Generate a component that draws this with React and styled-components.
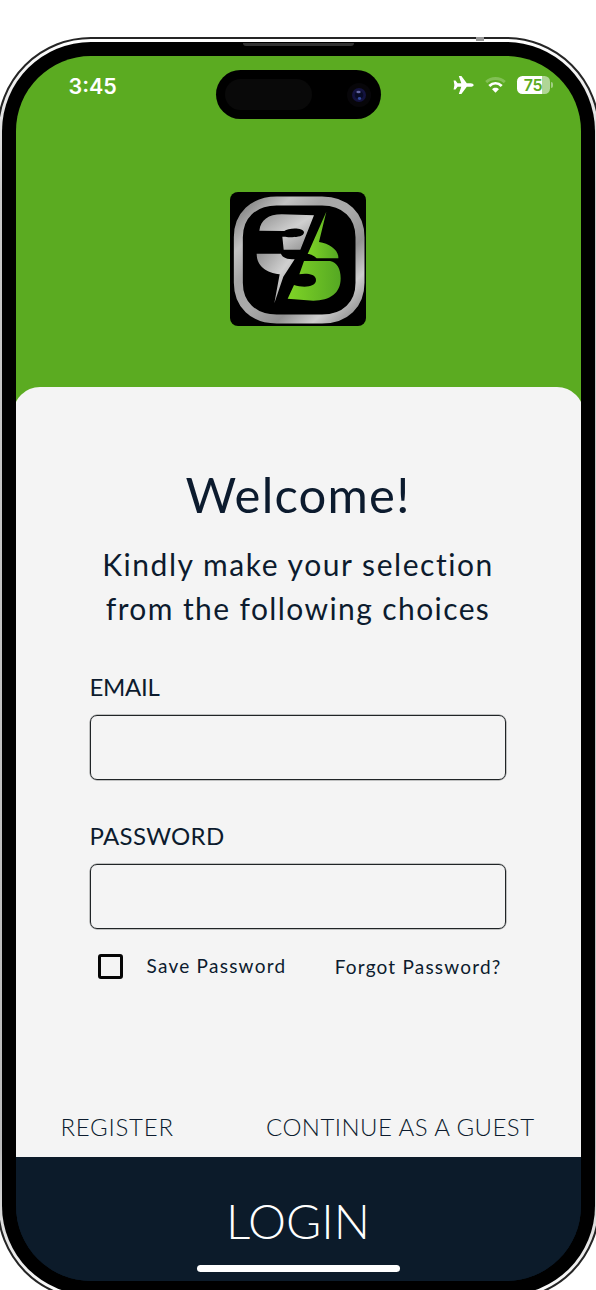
import React, { useState } from 'react';
import styled, { createGlobalStyle } from 'styled-components';

const GlobalStyle = createGlobalStyle`
  * {
    box-sizing: border-box;
  }

  body {
    margin: 0;
    background: #fff;
    color: #0c1b2e;
    font-family: Lato, 'Open Sans', sans-serif;
  }
`;

const Page = styled.main`
  width: 596px;
  height: 1290px;
  padding-top: 37px;
  overflow: hidden;
`;

const Frame = styled.div`
  width: 603px;
  height: 1263px;
  margin-left: -3.5px;
  padding: 3px;
  border: 2px solid #252525;
  border-radius: 94px;
  background: linear-gradient(180deg, #fff, #c9c9c9 12%, #bbb 88%, #fff);
`;

const Bezel = styled.div`
  position: relative;
  height: 100%;
  padding: 14px;
  border-radius: 89px;
  background: #000;
`;

const Speaker = styled.span`
  position: absolute;
  top: 1px;
  left: 241px;
  width: 111px;
  height: 3px;
  border-radius: 0 0 3px 3px;
  background: #333;
`;

const AntennaBand = styled.span`
  position: absolute;
  top: -5px;
  left: 474px;
  width: 8px;
  height: 4px;
  background: #999;
`;

const Screen = styled.div`
  display: flex;
  flex-direction: column;
  height: 1225px;
  border-radius: 75px;
  background: linear-gradient(#5bab21 50%, #0c1b2a 50%);
  overflow: hidden;
`;

const StatusBar = styled.header`
  display: flex;
  justify-content: space-between;
  height: 64px;
  padding: 14px 29px 0 53px;
  color: #fff;
`;

const Clock = styled.time`
  width: 147px;
  padding-top: 2px;
  font: 600 21.5px/28px Inter, sans-serif;
`;

const Island = styled.div`
  display: flex;
  align-items: center;
  justify-content: space-between;
  width: 165px;
  height: 49px;
  padding: 0 10px 0 9px;
  border-radius: 25px;
  background: #000;
`;

const Sensor = styled.span`
  width: 87px;
  height: 31px;
  border-radius: 16px;
  background: #090909;
`;

const StatusIcons = styled.div`
  display: flex;
  align-items: center;
  gap: 11px;
  width: 171px;
  height: 30px;
  padding-left: 72px;
`;

const Battery = styled.div`
  position: relative;
  width: 33px;
  height: 18px;
  border-radius: 5.5px;
  background: linear-gradient(90deg, #fff 75%, #b0d696 75%);
  color: #5bab21;
  font: 600 16px/18px Inter, sans-serif;
  letter-spacing: -0.3px;
  text-align: center;

  &::after {
    content: '';
    position: absolute;
    top: 6px;
    right: -3px;
    width: 2px;
    height: 6px;
    border-radius: 0 3px 3px 0;
    background: #a2cf83;
  }
`;

const Brand = styled.div`
  display: flex;
  justify-content: center;
  height: 267px;
  padding-top: 72px;
`;

const Card = styled.section`
  display: flex;
  flex: 1;
  flex-direction: column;
  margin: 0 -3px;
  padding: 78px 48px 0;
  border-radius: 27px 27px 0 0;
  background: #f4f4f4;
`;

const Title = styled.h1`
  margin: 0;
  font-size: 49px;
  font-weight: 400;
  line-height: 58px;
  letter-spacing: 1.2px;
  text-align: center;
`;

const Lead = styled.p`
  margin: 19px 0 0;
  font-size: 30px;
  line-height: 44px;
  text-align: center;
`;

const LeadLine = styled.span`
  display: block;
  letter-spacing: ${props => props.$tracking}px;
`;

const Form = styled.form`
  padding: 42px 29px 0;
`;

const Field = styled.label`
  display: block;
  height: 149px;
  font-size: 24px;
  line-height: 30px;
  letter-spacing: ${props => props.$tracking}px;
`;

const Input = styled.input`
  display: block;
  width: 416px;
  height: 65px;
  margin-top: 13px;
  padding: 0 16px;
  border: 1px solid #202426;
  border-radius: 7px;
  outline: none;
  background: transparent;
  box-shadow: 0 0 0 0.5px rgba(32, 36, 38, 0.5);
  font: inherit;
`;

const Options = styled.div`
  display: flex;
  align-items: center;
  justify-content: space-between;
  margin-top: -17px;
  padding: 0 5px 0 8px;
  font-size: 19px;
  line-height: 26px;
`;

const Remember = styled.label`
  display: flex;
  align-items: center;
  gap: 24px;
  letter-spacing: 1.25px;
`;

const Checkbox = styled.input`
  width: 25px;
  height: 25px;
  margin: 0;
  border: 3px solid #050505;
  border-radius: 3px;
  appearance: none;
`;

const LinkButton = styled.button`
  padding: 0;
  border: 0;
  background: none;
  color: inherit;
  font-family: inherit;
  font-size: ${props => props.$size || 19}px;
  font-weight: ${props => props.$weight || 400};
  letter-spacing: ${props => props.$tracking || 0}px;
`;

const Actions = styled.div`
  display: flex;
  justify-content: space-between;
  margin-top: auto;
  padding: 0 1px 16px 0;
`;

const Footer = styled.footer`
  display: flex;
  flex-direction: column;
  align-items: center;
  justify-content: space-between;
  height: 124px;
  padding: 35px 0 9px;
  background: #0c1b2a;
  color: #fff;
`;

const HomeIndicator = styled.span`
  width: 203px;
  height: 7px;
  border-radius: 4px;
  background: #fff;
`;

const Camera = () => (
  <svg width="24" height="30" viewBox="0 0 24 30">
    <circle cx="12" cy="15" r="12" fill="#070609" />
    <circle cx="12" cy="15" r="7" fill="#14133f" />
    <circle cx="12" cy="15" r="4.3" fill="#080b25" />
    <ellipse cx="11.5" cy="12" rx="2.2" ry="1.2" fill="#6467a4" />
    <ellipse cx="12.5" cy="18.5" rx="1.7" ry="1.4" fill="#30489a" />
  </svg>
);

const Plane = () => (
  <svg width="21" height="20" viewBox="0 0 21 20" fill="#fff">
    <path d="M20.7 10c0 .9-1.5 1.8-3 1.8h-3.9L8.4 18.9H5.8l2.5-7.1H4.6L2.5 14.4H.6l.8-4.4-.8-4.4h1.9l2.1 2.6h3.7L5.8 1.1h2.6l5.4 7.1h3.9c1.5 0 3 .9 3 1.8z" />
  </svg>
);

const Wifi = () => (
  <svg width="21" height="18" viewBox="0 0 21 18" fill="none" strokeWidth="2.9">
    <path d="M1.2 6.1C6.4 1.2 14.6 1.2 19.8 6.1" stroke="#82c055" />
    <path d="M4.3 10C8 6.5 13 6.5 16.7 10" stroke="#fff" />
    <path d="M7.1 13.2c1.9-1.8 4.9-1.8 6.8 0l-3.4 3.5z" fill="#fff" />
  </svg>
);

const Logo = () => (
  <svg width="136" height="134" viewBox="30 36 408 402" preserveAspectRatio="none">
    <defs>
      <linearGradient id="ring" x1="0" y1="0" x2="1" y2="1">
        <stop offset="0" stopColor="#777" />
        <stop offset=".2" stopColor="#c2c2c2" />
        <stop offset=".34" stopColor="#a6a6a6" />
        <stop offset=".5" stopColor="#aaa" />
        <stop offset=".67" stopColor="#929292" />
        <stop offset=".82" stopColor="#cecece" />
        <stop offset="1" stopColor="#858585" />
      </linearGradient>
      <linearGradient id="steel" x1="0" y1="0" x2="1" y2="1">
        <stop offset="0" stopColor="#929292" />
        <stop offset=".5" stopColor="#d0d0d0" />
        <stop offset="1" stopColor="#8b8b8b" />
      </linearGradient>
      <linearGradient id="lime" x1="0" y1="0" x2="1" y2="0">
        <stop offset="0" stopColor="#7fd426" />
        <stop offset="1" stopColor="#55a823" />
      </linearGradient>
    </defs>
    <rect x="30" y="36" width="408" height="402" rx="24" fill="#000" />
    <path
      d="M170 63H306C376 63 420 107 420 172V308C420 373 376 417 306 417H170C100 417 55 373 55 308V172C55 107 100 63 170 63Z"
      fill="none"
      stroke="url(#ring)"
      strokeWidth="27"
    />
    <g fill="url(#steel)">
      <path d="M118 152C122 120 145 103 185 103L282 106 241 209H191L187 170H196C210 173 252 174 252 157 252 142 205 142 193 153Z" />
      <path d="M110 221H183C187 233 200 238 224 238L190 290 163 370 179 283C140 278 110 260 110 221Z" />
    </g>
    <g fill="url(#lime)">
      <path d="M319 95 297 186C330 190 357 212 355 235H290C280 225 270 222 263 222Z" />
      <path d="M252 243H330C352 247 362 268 362 295 362 340 330 362 280 362L203 356 222 315C250 324 288 322 288 300 288 280 255 280 238 283Z" />
    </g>
  </svg>
);

const App = () => {
  const [saved, setSaved] = useState(false);

  return (
    <Page>
      <GlobalStyle />
      <Frame>
        <Bezel>
          <Speaker />
          <AntennaBand />
          <Screen>
            <StatusBar>
              <Clock>3:45</Clock>
              <Island>
                <Sensor />
                <Camera />
              </Island>
              <StatusIcons>
                <Plane />
                <Wifi />
                <Battery>75</Battery>
              </StatusIcons>
            </StatusBar>
            <Brand>
              <Logo />
            </Brand>
            <Card>
              <Title>Welcome!</Title>
              <Lead>
                <LeadLine $tracking={1.55}>Kindly make your selection</LeadLine>
                <LeadLine $tracking={1.4}>from the following choices</LeadLine>
              </Lead>
              <Form>
                <Field $tracking={-0.3}>
                  EMAIL
                  <Input type="email" />
                </Field>
                <Field $tracking={0.3}>
                  PASSWORD
                  <Input type="password" />
                </Field>
                <Options>
                  <Remember>
                    <Checkbox
                      type="checkbox"
                      checked={saved}
                      onChange={e => setSaved(e.target.checked)}
                    />
                    Save Password
                  </Remember>
                  <LinkButton type="button" $tracking={1.2}>Forgot Password?</LinkButton>
                </Options>
              </Form>
              <Actions>
                <LinkButton $size={24} $weight={300} $tracking={0.75}>REGISTER</LinkButton>
                <LinkButton $size={24} $weight={300} $tracking={0.45}>CONTINUE AS A GUEST</LinkButton>
              </Actions>
            </Card>
            <Footer>
              <LinkButton $size={48} $weight={300}>LOGIN</LinkButton>
              <HomeIndicator />
            </Footer>
          </Screen>
        </Bezel>
      </Frame>
    </Page>
  );
};

export default App;
